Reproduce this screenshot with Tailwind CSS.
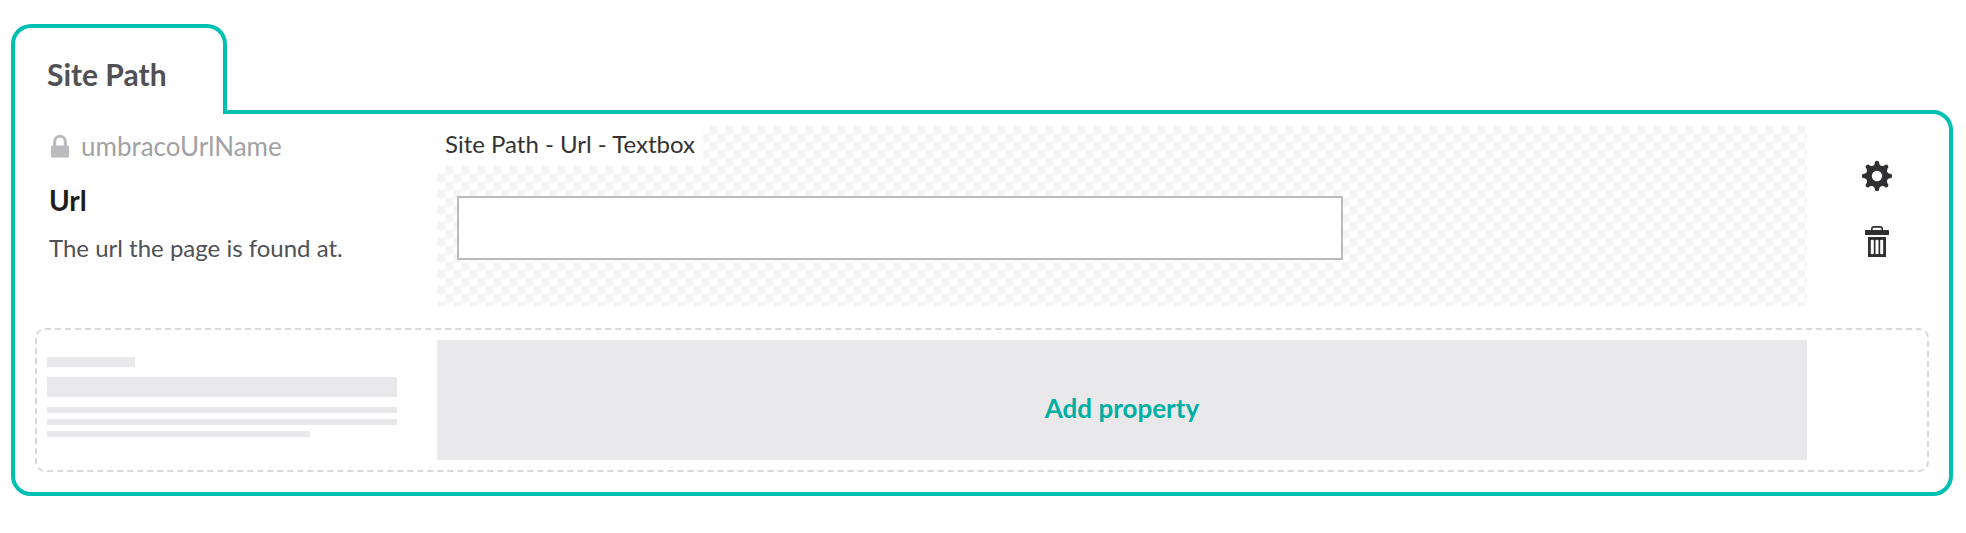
<!DOCTYPE html>
<html lang="en">
<head>
    <meta charset="UTF-8">
    <meta name="viewport" content="width=device-width, initial-scale=1.0">
    <title>Document Type Editor</title>
    <script src="https://cdn.jsdelivr.net/npm/@tailwindcss/browser@4"></script>
</head>
<body class="bg-white font-['Lato',sans-serif]">
    <main class="pt-6 pl-[11px] pr-[13px]">
        <!-- Tab -->
        <h2 class="relative z-10 -mb-1 w-[216px] rounded-t-[20px] border-4 border-b-0 border-[#00bfb3] bg-white pt-[26px] pb-5 pl-8 text-[30px] leading-10 font-bold text-[#515054]">Site Path</h2>

        <section class="rounded-[20px] rounded-tl-none border-4 border-[#00bfb3] px-5 pt-3 pb-5">
            <!-- Property -->
            <div class="mb-[22px] flex gap-10 pl-3">
                <div class="w-[350px] shrink-0 pl-[2px]">
                    <div class="flex items-center gap-3 text-[26px] leading-10 text-[#a2a1a6]">
                        <svg class="h-6 w-5" viewBox="0 0 20 24" aria-hidden="true">
                            <path d="M5.700 12V7.500a5.300 5.300 0 0 1 10.600 0V12" fill="none" stroke="#bbbabf" stroke-width="3"/>
                            <rect x="2" y="11.500" width="18" height="12" rx="1" fill="#bbbabf"/>
                        </svg>
                        <span>umbracoUrlName</span>
                    </div>
                    <label for="url" class="mt-4 block text-[28px] leading-9 font-bold text-[#1d1d1d]">Url</label>
                    <p class="mt-[14px] text-2xl leading-8 text-[#515054]">The url the page is found at.</p>
                </div>

                <div class="h-[180px] flex-1 bg-[repeating-conic-gradient(#ffffff_0%_25%,#f5f5f5_0%_50%)] bg-[length:16px_16px]">
                    <div class="w-fit bg-white pr-2 pb-1 pl-2 text-2xl leading-9 text-[#333333]">Site Path - Url - Textbox</div>
                    <div class="px-5 pt-[30px]">
                        <input type="text" id="url" class="block h-16 w-full max-w-[886px] border-2 border-[#bbbabf] bg-white px-4 text-2xl outline-none">
                    </div>
                </div>

                <div class="-ml-10 flex w-[122px] shrink-0 flex-col gap-[34px] pt-[34px] pl-[54px]">
                    <button type="button" aria-label="Settings" class="size-8 cursor-pointer">
                        <svg class="size-8" viewBox="-16 -16 32 32" fill="none" stroke="#303033" aria-hidden="true">
                            <circle r="8.1" stroke-width="5.8"/>
                            <g fill="#303033" stroke="none">
                                <path id="tooth" d="M-4.600-9.500Q-2.600-10.800-2.200-12.600V-13.400Q-2-15.200 0-15.200Q2-15.200 2.200-13.400V-12.600Q2.600-10.800 4.600-9.500Z"/>
                                <use href="#tooth" transform="rotate(45)"/>
                                <use href="#tooth" transform="rotate(90)"/>
                                <use href="#tooth" transform="rotate(135)"/>
                                <use href="#tooth" transform="rotate(180)"/>
                                <use href="#tooth" transform="rotate(225)"/>
                                <use href="#tooth" transform="rotate(270)"/>
                                <use href="#tooth" transform="rotate(315)"/>
                            </g>
                        </svg>
                    </button>
                    <button type="button" aria-label="Delete" class="size-8 cursor-pointer">
                        <svg class="size-8" viewBox="0 0 32 32" fill="#303033" aria-hidden="true">
                            <path d="M10.800 5V3Q10.800.9 13 .9h6Q21.200.9 21.200 3V5" fill="none" stroke="#303033" stroke-width="1.6"/>
                            <rect x="4" y="4" width="24" height="5" rx="0.6"/>
                            <path fill-rule="evenodd" d="M7 11h18v20H7zM9.800 14.500v13q0 .8 1.500.8t1.500-.8v-13q0-.8-1.500-.8t-1.500.8zM14.500 14.500v13q0 .8 1.500.8t1.500-.8v-13q0-.8-1.500-.8t-1.500.8zM19.200 14.500v13q0 .8 1.500.8t1.500-.8v-13q0-.8-1.500-.8t-1.500.8z"/>
                        </svg>
                    </button>
                </div>
            </div>

            <!-- Add property placeholder -->
            <button type="button" class="flex w-full cursor-pointer gap-10 rounded-[10px] border-2 border-dashed border-[#d8d7d9] py-[10px] pr-[120px] pl-[10px]">
                <span class="flex w-[350px] shrink-0 flex-col pt-[17px]">
                    <span class="h-[10px] w-[88px] bg-[#e9e9eb]"></span>
                    <span class="mt-[10px] h-5 bg-[#e9e9eb]"></span>
                    <span class="mt-[10px] h-[6px] bg-[#e9e9eb]"></span>
                    <span class="mt-[6px] h-[6px] bg-[#e9e9eb]"></span>
                    <span class="mt-[6px] h-[6px] w-3/4 bg-[#e9e9eb]"></span>
                </span>
                <span class="flex h-[120px] flex-1 items-center justify-center bg-[#e9e9eb] pt-4 text-[26px] leading-8 font-bold text-[#00aea2]">Add property</span>
            </button>
        </section>
    </main>
</body>
</html>
